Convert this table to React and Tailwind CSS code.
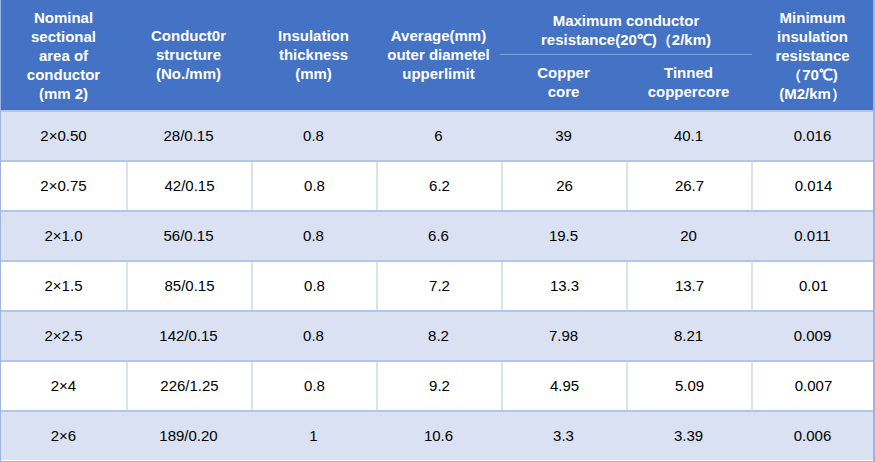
const rows = [
  ["2×0.50", "28/0.15", "0.8", "6", "39", "40.1", "0.016"],
  ["2×0.75", "42/0.15", "0.8", "6.2", "26", "26.7", "0.014"],
  ["2×1.0", "56/0.15", "0.8", "6.6", "19.5", "20", "0.011"],
  ["2×1.5", "85/0.15", "0.8", "7.2", "13.3", "13.7", "0.01"],
  ["2×2.5", "142/0.15", "0.8", "8.2", "7.98", "8.21", "0.009"],
  ["2×4", "226/1.25", "0.8", "9.2", "4.95", "5.09", "0.007"],
  ["2×6", "189/0.20", "1", "10.6", "3.3", "3.39", "0.006"],
];

const Head = ({ children, className = "" }) => (
  <div className={`flex items-center justify-center text-center ${className}`}>
    <div>{children}</div>
  </div>
);

export default function App() {
  return (
    <div
      className="w-[875px] h-[462px] bg-white border-l border-r-2 border-b border-[#9db4e0] overflow-hidden"
      style={{ fontFamily: '"Liberation Sans", Arial, sans-serif' }}
    >
      <div className="grid grid-cols-[125px_125px_125px_125px_125px_125px_123px] h-[110px] bg-[#4472c4] text-white font-bold text-[15px] leading-[19px]">
        <Head>
          Nominal
          <br />
          sectional
          <br />
          area of
          <br />
          conductor
          <br />
          (mm 2)
        </Head>
        <Head className="pb-[2px]">
          Conduct0r
          <br />
          structure
          <br />
          (No./mm)
        </Head>
        <Head className="pb-[2px]">
          Insulation
          <br />
          thickness
          <br />
          (mm)
        </Head>
        <Head className="pb-[2px]">
          Average(mm)
          <br />
          outer diametel
          <br />
          upperlimit
        </Head>
        <div className="col-span-2 flex flex-col">
          <div className="h-[55px] border-b border-[#7f9fd8] mx-[-1px] flex items-center justify-center text-center pt-[5px]">
            <div>
              Maximum conductor
              <br />
              resistance(20℃)（2/km)
            </div>
          </div>
          <div className="flex-1 grid grid-cols-2">
            <Head className="pb-[2px]">
              Copper
              <br />
              core
            </Head>
            <Head className="pb-[2px]">
              Tinned
              <br />
              coppercore
            </Head>
          </div>
        </div>
        <Head>
          Minimum
          <br />
          insulation
          <br />
          resistance
          <br />
          （70℃)
          <br />
          (M2/km）
        </Head>
      </div>
      {rows.map((r, i) => (
        <div
          key={i}
          className={`grid grid-cols-[125px_125px_125px_125px_125px_125px_123px] h-[50px] border-t-2 border-[#b4c6e7] text-[15px] text-black ${
            i % 2 === 0 ? "bg-[#d9e1f2]" : "bg-white"
          }`}
        >
          {r.map((c, j) => (
            <div
              key={j}
              className={`flex items-center justify-center ${
                j > 0 && i % 2 === 1 ? "border-l-2 border-[#d9e1f2]" : ""
              }`}
            >
              {c}
            </div>
          ))}
        </div>
      ))}
    </div>
  );
}
